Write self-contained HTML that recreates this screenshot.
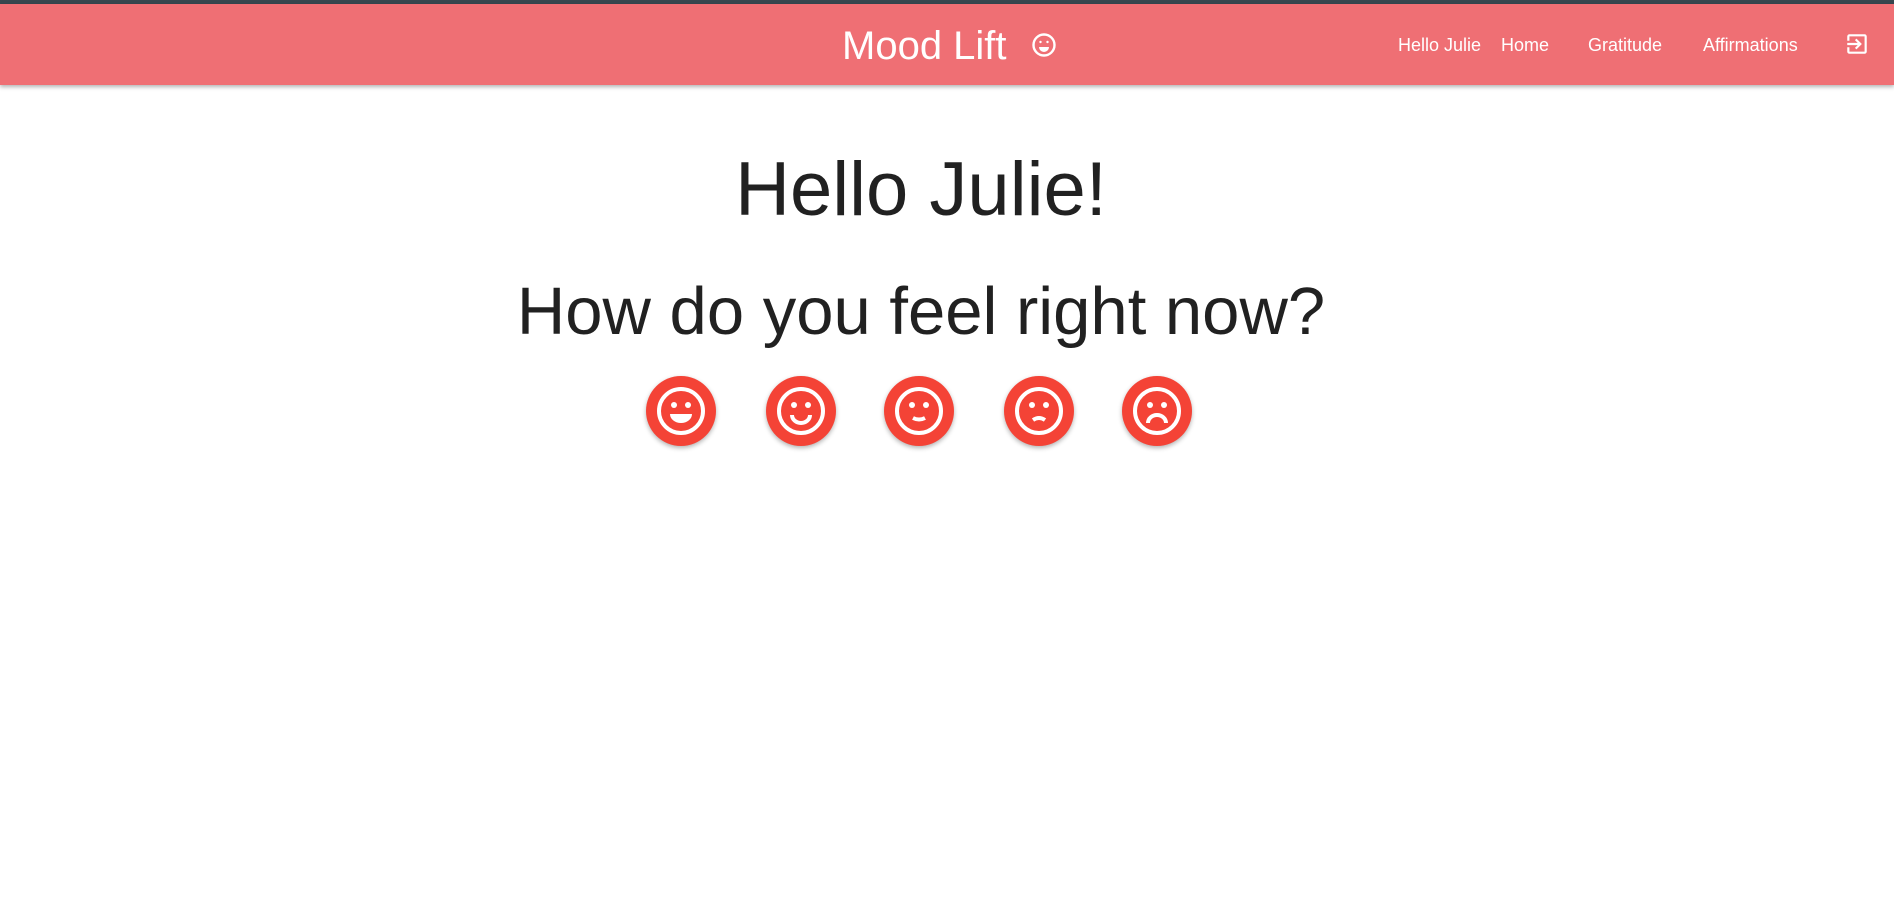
<!DOCTYPE html>
<html><head><style>
body{margin:0;width:1894px;height:917px;background:#fff;font-family:"Liberation Sans",sans-serif;position:relative;overflow:hidden;color:#212121}
.top{position:absolute;left:0;top:0;width:1894px;height:4px;background:#37474f}
.hdr{position:absolute;left:0;top:4px;width:1894px;height:81px;background:#ef6f74;box-shadow:0 2px 4px rgba(0,0,0,.3)}
.t{position:absolute;color:#fff;white-space:nowrap}
.h1{position:absolute;width:1894px;left:-26px;text-align:center;white-space:nowrap}
.b{position:absolute;top:376px;width:70px;height:70px;border-radius:50%;background:#f44336;box-shadow:0 2px 5px rgba(0,0,0,.3)}
</style></head><body>
<div class="top"></div>
<div class="hdr"></div>
<div class="t" style="left:842px;top:24px;font-size:40px">Mood Lift</div>
<svg style="position:absolute;left:1031px;top:32px" width="26" height="26" viewBox="0 0 26 26" fill="none" stroke="#fff" stroke-width="2.4"><circle cx="13" cy="13" r="10.5"/><circle cx="9.5" cy="10" r="1.2" fill="#fff" stroke="none"/><circle cx="16.5" cy="10" r="1.2" fill="#fff" stroke="none"/><path d="M8 15h10a5 5 0 0 1-10 0z" fill="#fff" stroke="none"/></svg>
<div class="t" style="left:1398px;top:35px;font-size:18px">Hello Julie</div>
<div class="t" style="left:1501px;top:35px;font-size:18px">Home</div>
<div class="t" style="left:1588px;top:35px;font-size:18px">Gratitude</div>
<div class="t" style="left:1703px;top:35px;font-size:18px">Affirmations</div>
<svg style="position:absolute;left:1844px;top:31px" width="26" height="26" viewBox="0 0 24 24" fill="#fff"><path d="M10.09 15.59L11.5 17l5-5-5-5-1.41 1.41L12.67 11H3v2h9.67l-2.58 2.59zM19 3H5a2 2 0 0 0-2 2v4h2V5h14v14H5v-4H3v4a2 2 0 0 0 2 2h14c1.1 0 2-.9 2-2V5c0-1.1-.9-2-2-2z"/></svg>
<div class="h1" style="top:146px;font-size:76px">Hello Julie!</div>
<div class="h1" style="top:273px;font-size:67px">How do you feel right now?</div>
<div class="b" style="left:646px"><svg width="70" height="70" viewBox="0 0 70 70" fill="none" stroke="#fff" stroke-width="4"><circle cx="35" cy="35" r="22"/><circle cx="28" cy="29" r="3" fill="#fff" stroke="none"/><circle cx="42" cy="29" r="3" fill="#fff" stroke="none"/><path d="M24 38h22a11 9 0 0 1-22 0z" fill="#fff" stroke="none"/></svg></div>
<div class="b" style="left:766px"><svg width="70" height="70" viewBox="0 0 70 70" fill="none" stroke="#fff" stroke-width="4"><circle cx="35" cy="35" r="22"/><circle cx="28" cy="29" r="3" fill="#fff" stroke="none"/><circle cx="42" cy="29" r="3" fill="#fff" stroke="none"/><path d="M26 39a9 8 0 0 0 18 0"/></svg></div>
<div class="b" style="left:884px"><svg width="70" height="70" viewBox="0 0 70 70" fill="none" stroke="#fff" stroke-width="4"><circle cx="35" cy="35" r="22"/><circle cx="28" cy="29" r="3" fill="#fff" stroke="none"/><circle cx="42" cy="29" r="3" fill="#fff" stroke="none"/><path d="M29 42q6 3 12 0"/></svg></div>
<div class="b" style="left:1004px"><svg width="70" height="70" viewBox="0 0 70 70" fill="none" stroke="#fff" stroke-width="4"><circle cx="35" cy="35" r="22"/><circle cx="28" cy="29" r="3" fill="#fff" stroke="none"/><circle cx="42" cy="29" r="3" fill="#fff" stroke="none"/><path d="M29 44q6 -4 12 0"/></svg></div>
<div class="b" style="left:1122px"><svg width="70" height="70" viewBox="0 0 70 70" fill="none" stroke="#fff" stroke-width="4"><circle cx="35" cy="35" r="22"/><circle cx="28" cy="29" r="3" fill="#fff" stroke="none"/><circle cx="42" cy="29" r="3" fill="#fff" stroke="none"/><path d="M26 47a9 8 0 0 1 18 0"/></svg></div>
</body></html>
